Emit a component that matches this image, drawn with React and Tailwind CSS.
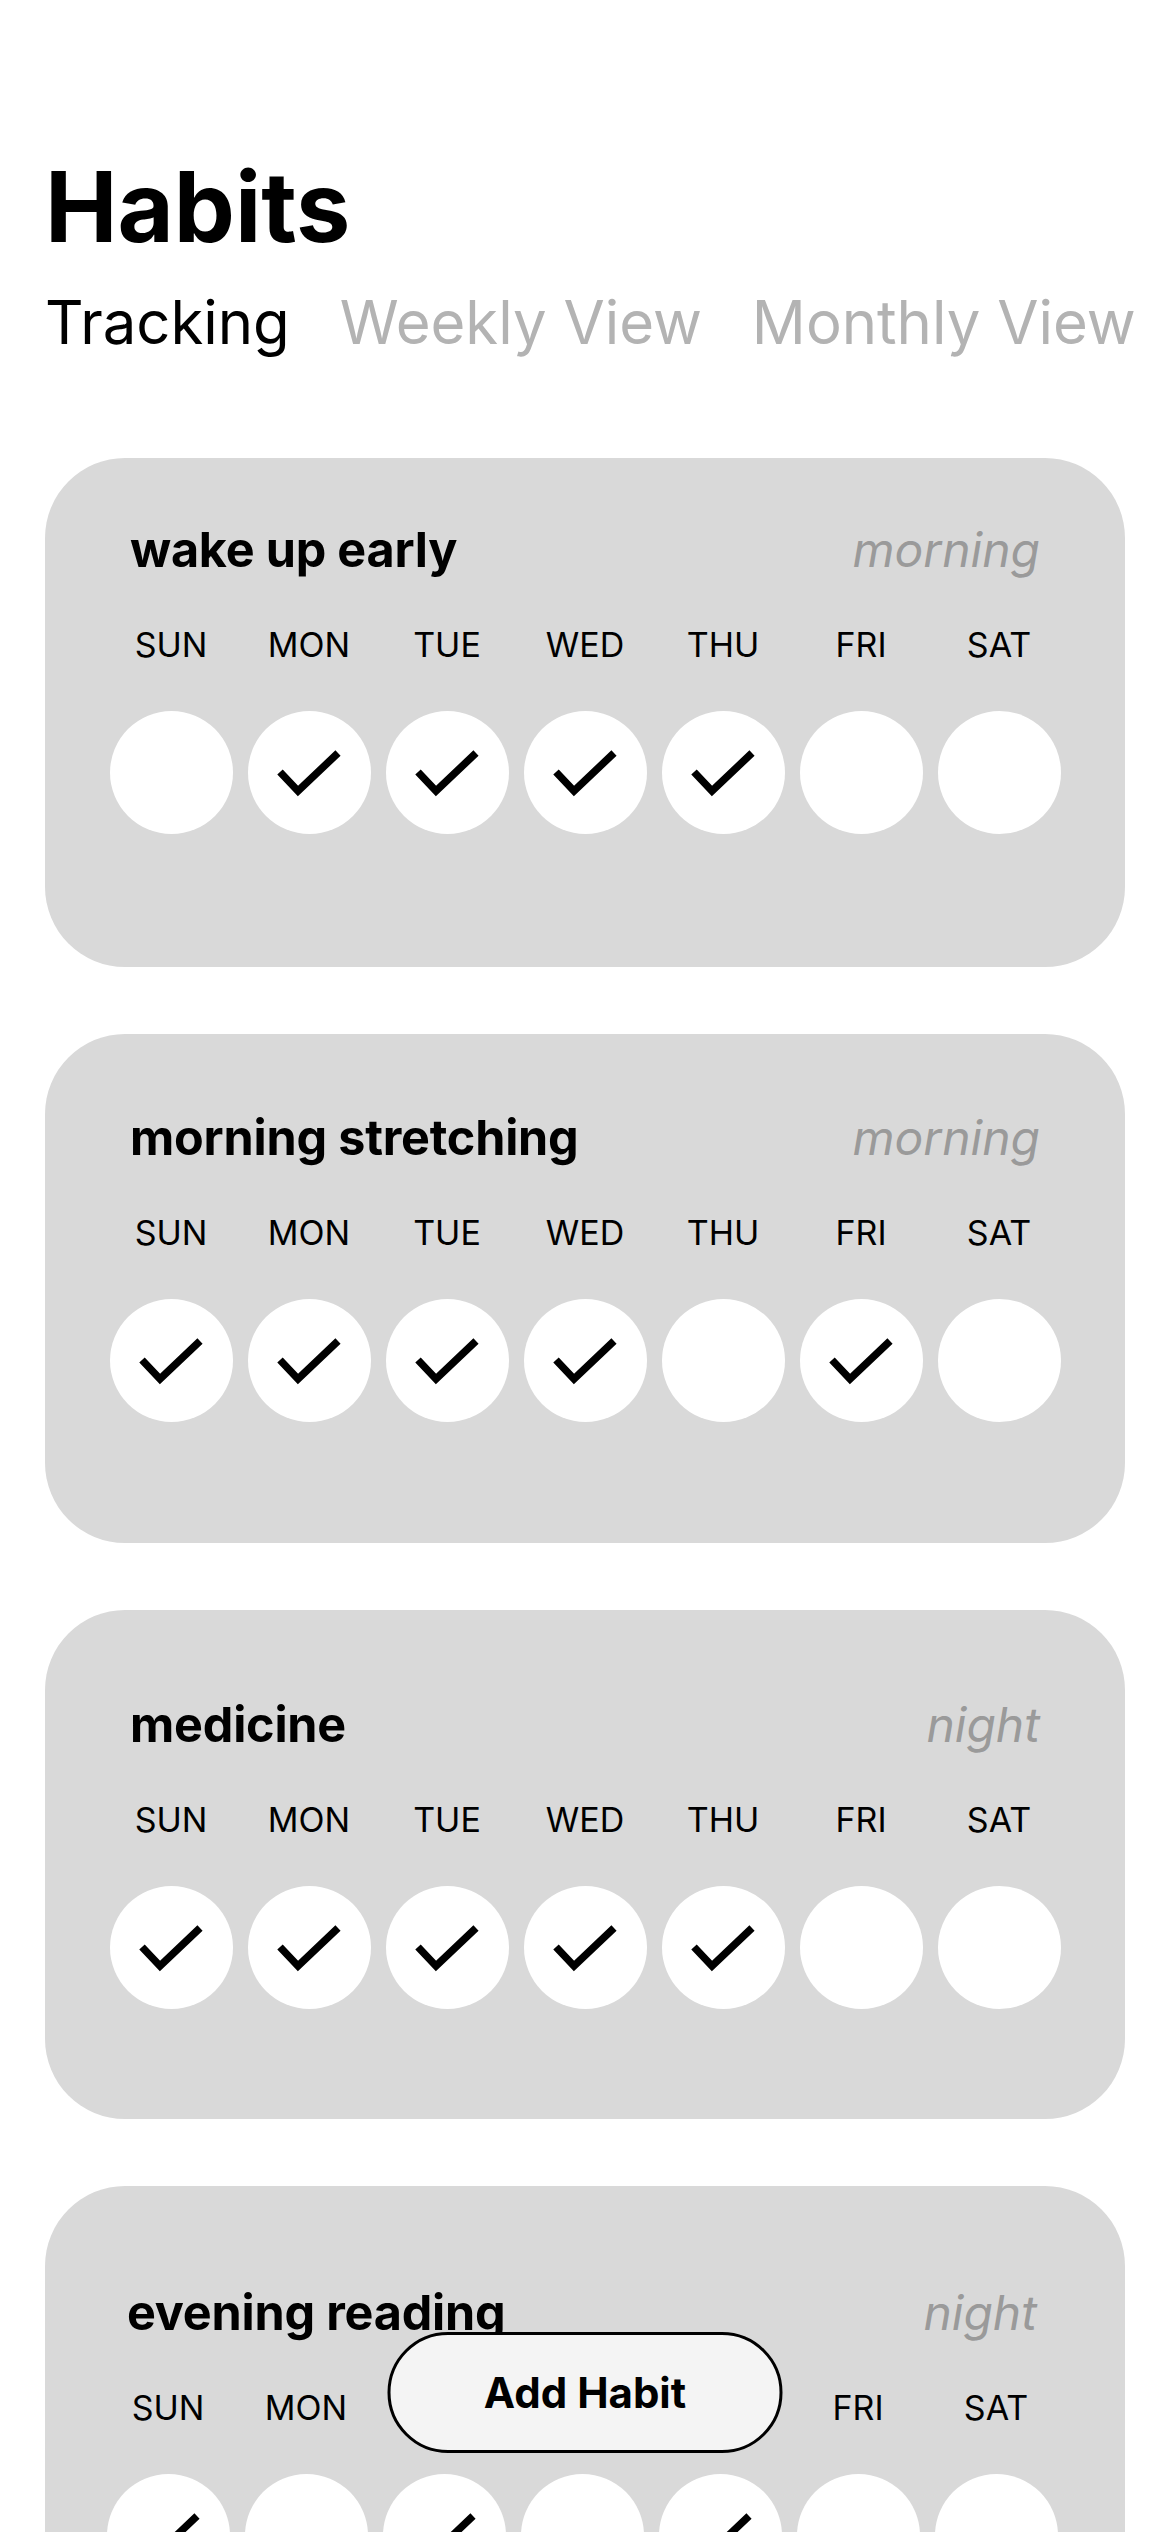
import React from 'react'

const days = ['SUN', 'MON', 'TUE', 'WED', 'THU', 'FRI', 'SAT']

// pt grows a little card by card, like in the mock
const habits = [
  { name: 'wake up early', time: 'morning', done: [0, 1, 1, 1, 1, 0, 0], pad: 'pt-[68px]' },
  { name: 'morning stretching', time: 'morning', done: [1, 1, 1, 1, 0, 1, 0], pad: 'pt-[80px]' },
  { name: 'medicine', time: 'night', done: [1, 1, 1, 1, 1, 0, 0], pad: 'pt-[91px]' },
  { name: 'evening reading', time: 'night', done: [1, 0, 1, 0, 1, 0, 0], pad: 'pt-[103px] -translate-x-[3px]' },
]

function Check() {
  return (
    <svg viewBox="0 0 123 123" className="h-[123px] w-[123px]">
      <path d="M32 61 L50 80 L90 42" fill="none" stroke="#000" strokeWidth="7.5" strokeLinecap="butt" strokeLinejoin="miter" />
    </svg>
  )
}

function HabitCard({ habit }) {
  return (
    <div className="h-[509px] shrink-0 overflow-hidden rounded-[80px] bg-[#d9d9d9]">
      <div className={habit.pad}>
        {/* title + time of day */}
        <div className="flex items-baseline justify-between px-[85px]">
          <span className="text-[48.5px] font-bold leading-none tracking-[-0.2px]">{habit.name}</span>
          <span className="text-[48px] italic leading-none text-[#9a9a9a]">{habit.time}</span>
        </div>

        <div className="mt-[54px] flex justify-center gap-[15px]">
          {days.map((d) => (
            <span key={d} className="w-[123px] text-center text-[34px] leading-none">
              {d}
            </span>
          ))}
        </div>

        <div className="mt-[49px] flex justify-center gap-[15px]">
          {habit.done.map((v, i) => (
            <div key={i} className="h-[123px] w-[123px] shrink-0 rounded-full bg-white">
              {v ? <Check /> : null}
            </div>
          ))}
        </div>
      </div>
    </div>
  )
}

export default function App() {
  return (
    <div className="relative h-[2532px] overflow-hidden bg-white font-['Inter',sans-serif] text-black">
      <div className="px-[45px] pt-[158px]">
        <h1 className="text-[97px] font-bold leading-none">Habits</h1>

        <div className="mt-[38px] flex gap-[50px] whitespace-nowrap text-[59.8px] leading-none">
          <span className="shrink-0">Tracking</span>
          <span className="shrink-0 text-[#b3b3b3]">Weekly View</span>
          <span className="shrink-0 text-[#b3b3b3]">Monthly View</span>
        </div>

        <div className="mt-[105px] flex flex-col gap-[67px]">
          {habits.map((h) => (
            <HabitCard key={h.name} habit={h} />
          ))}
        </div>
      </div>

      <button className="absolute bottom-[79px] left-1/2 h-[121px] w-[395px] -translate-x-1/2 rounded-full border-[3px] border-black bg-[#f4f4f4] text-[42px] font-bold leading-none text-black">
        Add Habit
      </button>
    </div>
  )
}
